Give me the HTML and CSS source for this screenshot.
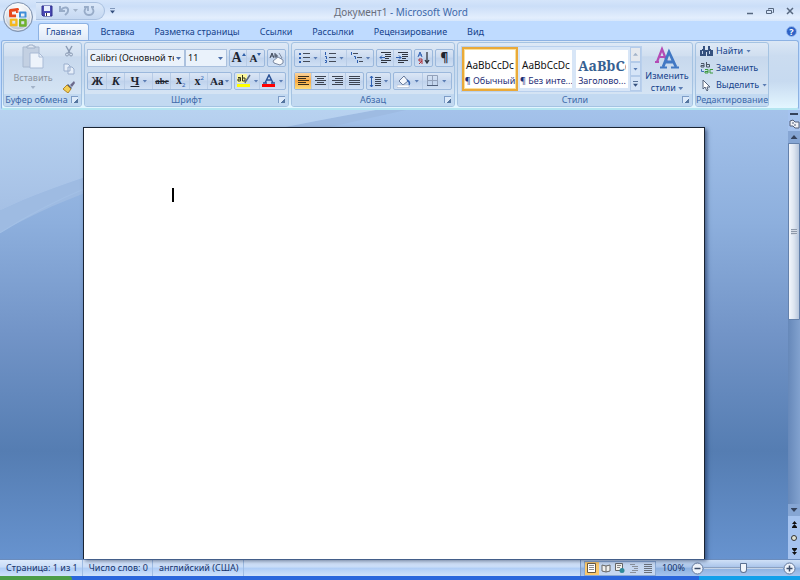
FILE: index.html
```html
<!DOCTYPE html>
<html lang="ru">
<head>
  <meta charset="UTF-8">
  <title>Документ1 - Microsoft Word</title>
  <meta name="viewport" content="width=device-width,initial-scale=1">
  <link rel="stylesheet" href="styles.css">
</head>
<body>
  <div class="window">
    <header class="titlebar">
      <button class="office" aria-label="Office">
        <svg width="32" height="32" viewBox="0 0 32 32">
          <defs>
            <radialGradient id="orb" cx=".5" cy=".25" r=".8"><stop offset="0" stop-color="#fff"/><stop offset=".55" stop-color="#dfe4ec"/><stop offset="1" stop-color="#a5b2c6"/></radialGradient>
          </defs>
          <circle cx="16" cy="16" r="14.5" fill="url(#orb)" stroke="#7f93b0"/>
          <circle cx="16" cy="16" r="13" fill="none" stroke="#fff" opacity=".7"/>
          <g fill="none" stroke-linejoin="round">
            <path d="M14 15H8.500V9.500L15.500 8.500V12" stroke="#e8481c" stroke-width="3"/>
            <path d="M18 11.500H23.500V16.500H18z" stroke="#3f8ed8" stroke-width="2"/>
            <path d="M9 18.500V24H14.500V18.500z" stroke="#f5b81d" stroke-width="2.500"/>
            <path d="M18 19H23.500V24.500H18z" stroke="#6fb22c" stroke-width="2.500"/>
          </g>
          <path d="M16.300 9v17M8 17h17" stroke="#fff" stroke-width=".8"/>
        </svg>
      </button>
      <div class="quick">
        <button aria-label="Сохранить"><svg width="12" height="12"><path d="M1 1h10v10H2l-1-1z" fill="#4a4ab4" stroke="#30308c"/><path d="M3 1h6v5H3z" fill="#e8eefc"/><path d="M4 8h5v3H4z" fill="#fff"/><path d="M5 8h1v3H5z" fill="#333"/></svg></button>
        <button class="off" aria-label="Отменить"><svg width="12" height="12"><path d="M2 1v5h5M3 5C6 1 11 2 10 6c0 2-2 3-3 4" fill="none" stroke="#98acc8" stroke-width="2"/></svg></button>
        <i class="ar gray"></i>
        <button class="off" aria-label="Повторить"><svg width="12" height="12"><path d="M3 3C0 6 2 10 6 10s6-4 3-7M5 6V2H1M8 2h3" fill="none" stroke="#98acc8" stroke-width="1.800"/></svg></button>
      </div>
      <button class="more" aria-label="Настройка панели"><i class="ar bar"></i></button>
      <h1 class="title"><span>Документ1</span> - Microsoft Word</h1>
      <div class="winbtns">
        <button aria-label="Свернуть"><svg width="8" height="8"><path d="M1 6.500h6" stroke="#56677f" stroke-width="1.500"/></svg></button>
        <button aria-label="Восстановить"><svg width="8" height="8"><path d="M2.500 2.500v-1h5v4h-1M.5 3.500h5v3h-5z" fill="none" stroke="#56677f"/></svg></button>
        <button aria-label="Закрыть"><svg width="8" height="8"><path d="M1 1l6 6M7 1L1 7" stroke="#56677f" stroke-width="1.500"/></svg></button>
      </div>
    </header>

    <nav class="tabs">
      <button class="tab active">Главная</button>
      <button class="tab">Вставка</button>
      <button class="tab">Разметка страницы</button>
      <button class="tab">Ссылки</button>
      <button class="tab">Рассылки</button>
      <button class="tab">Рецензирование</button>
      <button class="tab">Вид</button>
      <button class="help" aria-label="Справка">?</button>
    </nav>

    <div class="ribbon">
      <section class="group clip">
        <div class="body">
          <button class="big off">
            <svg width="24" height="26"><path d="M2 3h16v20H2z" fill="#c3d0e2" stroke="#a9b9d0"/><path d="M6 4h8V2h-2V1H8v1H6z" fill="#e0e8f3" stroke="#9fb0c8"/><path d="M9 9h9l4 4v11H9z" fill="#edf3fb" stroke="#a9bbd6"/><path d="M18 9v4h4" fill="none" stroke="#a9bbd6"/></svg>
            <span>Вставить</span>
            <i class="ar gray"></i>
          </button>
          <div class="col">
            <button class="off" aria-label="Вырезать"><svg width="12" height="12"><path d="M3 1l4 7M9 1L5 8" stroke="#8b9bb4" stroke-width="1.500"/><circle cx="4" cy="9.500" r="1.500" fill="none" stroke="#8b9bb4"/><circle cx="8" cy="9.500" r="1.500" fill="none" stroke="#8b9bb4"/></svg></button>
            <button class="off" aria-label="Копировать"><svg width="12" height="12"><path d="M1 1h4l2 2v5H1zM5 4h4l2 2v5H5z" fill="#e6eef9" stroke="#9aaecd"/></svg></button>
            <button aria-label="Формат по образцу"><svg width="14" height="12"><path d="M8 4l4-4 1 2-3 4z" fill="#6b6a8c"/><path d="M6 3l4 4-1 1-4-4z" fill="#555b78"/><path d="M5 4l4 4-3 4-5-4z" fill="#f3cf57" stroke="#b0862a"/></svg></button>
          </div>
        </div>
        <h2>Буфер обмена<button class="launch" aria-label="Буфер обмена: параметры"></button></h2>
      </section>

      <section class="group font">
        <div class="body rows">
          <div class="row">
            <label class="combo face"><select aria-label="Шрифт"><option>Calibri (Основной текст)</option></select></label>
            <label class="combo size"><select aria-label="Размер"><option>11</option></select></label>
            <div class="set">
              <button class="serif" aria-label="Увеличить"><span class="l">A</span><svg width="4" height="12"><path d="M0 4l2-3 2 3z" fill="#2f5fa8"/></svg></button>
              <button class="serif" aria-label="Уменьшить"><span class="s">A</span><svg width="4" height="12"><path d="M0 1h4L2 4z" fill="#2f5fa8"/></svg></button>
            </div>
            <div class="set"><button aria-label="Очистить формат"><svg width="15" height="15"><path d="M1 7l2-5 2 5M2 5h2M6 2v4h2V4H6" fill="none" stroke="#3b4456"/><path d="M10 2l3 5-3 1" fill="none" stroke="#7d8aa2"/><path d="M4 10l5-4 5 3v3l-3 2-6-2z" fill="#f8fafc" stroke="#7d8aa2"/></svg></button></div>
          </div>
          <div class="row">
            <div class="set letters">
              <button><b>Ж</b></button>
              <button><b><em>К</em></b></button>
              <button class="drop"><b><u>Ч</u></b><i class="ar"></i></button>
              <button class="small"><b><s>abc</s></b></button>
              <button><span><b>x</b><sub>2</sub></span></button>
              <button><span><b>x</b><sup>2</sup></span></button>
              <button class="drop aa"><b>Aa</b><i class="ar"></i></button>
            </div>
            <div class="set paint">
              <button class="drop" aria-label="Выделение"><svg width="14" height="14"><path d="M0 0h10v9H0z" fill="#fbf7a0"/><path d="M1 3.500h2.500V7H1V5h2M5.500 1v6H8V4H6" fill="none" stroke="#33351a"/><path d="M13 1L9 7l-1 2" stroke="#5a6a85" stroke-width="1.500" fill="none"/><path d="M0 10h13v3H0z" fill="#ff0"/></svg><i class="ar"></i></button>
              <button class="drop" aria-label="Цвет текста"><svg width="14" height="14"><path d="M3 9l4-8 4 8M4 6h6M1 9h4M9 9h4" fill="none" stroke="#2f5597" stroke-width="1.500"/><path d="M0 10h13v3H0z" fill="#f00"/></svg><i class="ar"></i></button>
            </div>
          </div>
        </div>
        <h2>Шрифт<button class="launch" aria-label="Шрифт: параметры"></button></h2>
      </section>

      <section class="group para">
        <div class="body rows">
          <div class="row">
            <div class="set lists">
              <button class="drop" aria-label="Маркеры"><svg width="12" height="12"><path d="M1 2h2M1 6h2M1 10h2" stroke="#2e5fb0" stroke-width="2"/><path d="M5 1.500h7M5 5.500h7M5 9.500h7" stroke="#444b58"/></svg><i class="ar"></i></button>
              <button class="drop" aria-label="Нумерация"><svg width="12" height="12"><path d="M1.500 0v3M1 4.500h1.500V7M1 8.500h1.500v2H1" fill="none" stroke="#2e5fb0"/><path d="M5 1.500h7M5 5.500h7M5 9.500h7" stroke="#444b58"/></svg><i class="ar"></i></button>
              <button class="drop" aria-label="Многоуровневый список"><svg width="13" height="12"><path d="M1.500 0v3M4 4.500h1.500V7M7.500 8v3" fill="none" stroke="#2e5fb0"/><path d="M3 1.500h5M7 5.500h5M9 9.500h4" stroke="#444b58"/></svg><i class="ar"></i></button>
            </div>
            <div class="set">
              <button aria-label="Уменьшить отступ"><svg width="13" height="12"><path d="M2 .5h10M6 2.500h6M6 4.500h6M6 6.500h4M2 8.500h10M2 10.500h6" stroke="#30353f"/><path d="M6 5.500H1M3 3.500l-2 2 2 2" stroke="#2e5fb0" fill="none"/></svg></button>
              <button aria-label="Увеличить отступ"><svg width="13" height="12"><path d="M2 .5h10M6 2.500h6M6 4.500h6M6 6.500h4M2 8.500h10M2 10.500h6" stroke="#30353f"/><path d="M0 5.500h5M3 3.500l2 2-2 2" stroke="#2e5fb0" fill="none"/></svg></button>
            </div>
            <div class="set"><button aria-label="Сортировка"><svg width="13" height="14"><path d="M1 6l2-5 2 5M2 4h3" stroke="#2e5fb0" fill="none"/><path d="M5 13V8H2v2h3L2 13" stroke="#b0323a" fill="none"/><path d="M10 1v10M8 9l2 3 2-3" stroke="#30353f" stroke-width="1.300" fill="none"/></svg></button></div>
            <div class="set"><button class="mark" aria-label="Знаки">¶</button></div>
          </div>
          <div class="row">
            <div class="set">
              <button class="on" aria-label="По левому краю"><svg width="13" height="12"><path d="M1 1.500h11M1 3.500h8M1 5.500h11M1 7.500h8M1 9.500h11" stroke="#3b2f1d"/></svg></button>
              <button aria-label="По центру"><svg width="13" height="12"><path d="M1 1.500h11M3 3.500h7M1 5.500h11M3 7.500h7M1 9.500h11" stroke="#3c4350"/></svg></button>
              <button aria-label="По правому краю"><svg width="13" height="12"><path d="M1 1.500h11M4 3.500h8M1 5.500h11M4 7.500h8M1 9.500h11" stroke="#3c4350"/></svg></button>
              <button aria-label="По ширине"><svg width="13" height="12"><path d="M1 1.500h11M1 3.500h11M1 5.500h11M1 7.500h11M1 9.500h11" stroke="#3c4350"/></svg></button>
            </div>
            <div class="set"><button class="drop line" aria-label="Интервал"><svg width="13" height="13"><path d="M2.500 1v11M1 3l1.500-2L4 3M1 10l1.500 2L4 10" fill="none" stroke="#2e5fb0"/><path d="M6 2.500h6M6 4.500h6M6 6.500h6M6 8.500h6M6 10.500h6" stroke="#3c4350"/></svg><i class="ar"></i></button></div>
            <div class="set paint">
              <button class="drop" aria-label="Заливка"><svg width="14" height="13"><path d="M2 6l5-5 4 5-5 4z" fill="#f4f7fc" stroke="#68799a"/><path d="M10 5c2 1 3 3 2 5" stroke="#3565b5" stroke-width="1.500" fill="none"/><path d="M0 10h12v2.500H0z" fill="#fff" stroke="#9aaac5" stroke-width=".5"/></svg><i class="ar"></i></button>
              <button class="drop" aria-label="Границы"><svg width="12" height="12"><path d="M.5 .5h10v10H.5zM5.500 1v9M1 5.500h9" fill="none" stroke="#93a2bb"/><path d="M0 10.500h11" stroke="#4f607c"/></svg><i class="ar"></i></button>
            </div>
          </div>
        </div>
        <h2>Абзац<button class="launch" aria-label="Абзац: параметры"></button></h2>
      </section>

      <section class="group styles">
        <div class="body">
          <div class="gallery">
            <button class="style on"><span class="sample">AaBbCcDc</span><span>¶ Обычный</span></button>
            <button class="style"><span class="sample">AaBbCcDc</span><span>¶ Без инте...</span></button>
            <button class="style"><span class="sample head">AaBbCc</span><span>Заголово...</span></button>
            <div class="gscroll">
              <button class="off" aria-label="Вверх"><i class="ar up gray"></i></button>
              <button aria-label="Вниз"><i class="ar"></i></button>
              <button aria-label="Все стили"><i class="ar bar"></i></button>
            </div>
          </div>
          <button class="big change">
            <svg width="26" height="24"><path d="M3 16L8 3l5 13M5 11h7M1 16h4M11 16h4" fill="none" stroke="#b44bb5" stroke-width="2.200"/><path d="M9 21l6-15 7 15M11 16h9" fill="none" stroke="#4178c4" stroke-width="2.800"/><path d="M6 21.500h7M17 21.500h8" stroke="#4178c4" stroke-width="2"/></svg>
            <span>Изменить</span>
            <span>стили <i class="ar"></i></span>
          </button>
        </div>
        <h2>Стили<button class="launch" aria-label="Стили: параметры"></button></h2>
      </section>

      <section class="group edit">
        <div class="body list">
          <button><svg width="13" height="12"><path d="M3 1h2v3H3zM8 1h2v3H8zM0 5h6v6H0zM7 5h6v6H7z" fill="#35507e"/><path d="M2 4h3v1H2zM8 4h3v1H8zM5 5h3v2H5z" fill="#35507e"/><path d="M2 6h1v3H2zM9 6h1v3H9z" fill="#c3d4ee"/></svg>Найти <i class="ar"></i></button>
          <button><svg width="13" height="12"><path d="M1 1.500h3V5H1V3.500h3M6.500 0v5h3V2.500H7" fill="none" stroke="#4a5465"/><path d="M1.500 7v2.500H4" fill="none" stroke="#3e6fb8"/><path d="M5 7.500h3V11H5V9.500h3M13 7.500h-3V11h3" fill="none" stroke="#3c9a3c"/></svg>Заменить</button>
          <button><svg width="13" height="12"><path d="M3 1v9l2-2 2 4 1-1-1-3h3z" fill="#fff" stroke="#56647c"/></svg>Выделить <i class="ar"></i></button>
        </div>
        <h2>Редактирование</h2>
      </section>
    </div>

    <main class="work">
      <svg class="swoosh" viewBox="0 0 788 450" preserveAspectRatio="none">
        <defs>
          <linearGradient id="sky" x1="0" y1="0" x2="0" y2="1"><stop offset="0" stop-color="#b8d2f0"/><stop offset="1" stop-color="#a5c0e5"/></linearGradient>
        </defs>
        <path d="M0 101C80 60 230 25 370 0H400C200 45 90 70 0 123z" fill="#9ebbe2"/>
        <path d="M0 0H370C230 25 80 60 0 101z" fill="url(#sky)"/>
        <path d="M0 123C60 85 110 66 170 50" fill="none" stroke="#a3c0e6"/>
      </svg>
      <div class="paper">
        <div class="text" role="textbox" aria-label="Текст документа" tabindex="0"><span class="caret"></span></div>
      </div>
      <aside class="scroll">
        <button class="split" aria-label="Разделить"></button>
        <button aria-label="Линейка"><svg width="11" height="10"><path d="M1 2l3-1 2 2h4v6H6L4 7H1z" fill="#eef1f6" stroke="#525f78"/><path d="M4 3v2M6 5v2" stroke="#525f78"/></svg></button>
        <div class="track">
          <button aria-label="Выше"><i class="ar up"></i></button>
          <div class="thumb"><i></i></div>
          <button aria-label="Ниже"><i class="ar"></i></button>
        </div>
        <button class="nav" aria-label="Предыдущая страница"><svg width="7" height="8"><path d="M3.500 0L6 3H1zM3.500 3L6 6H1zM1 6h5v1H1z" fill="#111"/></svg></button>
        <button class="nav" aria-label="Объект перехода"><svg width="8" height="8"><circle cx="4" cy="4" r="2.500" fill="#e0e3d4" stroke="#333"/></svg></button>
        <button class="nav" aria-label="Следующая страница"><svg width="7" height="8"><path d="M1 1h5v1H1zM1 2h5L3.500 5zM1 5h5L3.500 8z" fill="#111"/></svg></button>
      </aside>
    </main>

    <footer class="status">
      <button>Страница: 1 из 1</button>
      <button>Число слов: 0</button>
      <button>английский (США)</button>
      <div class="right">
        <div class="views">
          <button class="on" aria-label="Разметка страницы"><svg width="10" height="10"><path d="M.5 .5h8v9h-8z" fill="#fff" stroke="#6b5a3c"/><path d="M2 2.500h5M2 4.500h5M2 6.500h5" stroke="#8c8c8c"/></svg></button>
          <button aria-label="Режим чтения"><svg width="10" height="10"><path d="M1 2l4 1 4-1v6L5 9 1 8zM5 3v6" fill="#f1f1ee" stroke="#666"/></svg></button>
          <button aria-label="Веб-документ"><svg width="10" height="10"><path d="M.5 .5h7v7h-7z" fill="#f1f1ee" stroke="#666"/><path d="M2 2.500h4M2 4.500h3" stroke="#888"/><circle cx="7" cy="7.500" r="2.500" fill="#2f8a9a"/></svg></button>
          <button aria-label="Структура"><svg width="10" height="10"><path d="M1 1.500h5M3 3.500h6M5 5.500h4M3 7.500h6M1 9.500h6" stroke="#8a919c"/></svg></button>
          <button aria-label="Черновик"><svg width="10" height="10"><path d="M1 1.500h8M1 3.500h8M1 5.500h8M1 7.500h8M1 9.500h8" stroke="#6a717c"/></svg></button>
        </div>
        <button class="pct">100%</button>
        <button class="round" aria-label="Уменьшить масштаб"><svg width="13" height="13"><circle cx="6.500" cy="6.500" r="5.500" fill="#eef3fb" stroke="#62789c"/><path d="M3.500 6.500h6" stroke="#3c4d69" stroke-width="1.500"/></svg></button>
        <input class="zoom" type="range" min="0" max="100" value="50" aria-label="Масштаб">
        <button class="round" aria-label="Увеличить масштаб"><svg width="13" height="13"><circle cx="6.500" cy="6.500" r="5.500" fill="#eef3fb" stroke="#62789c"/><path d="M3.500 6.500h6M6.500 3.500v6" stroke="#3c4d69" stroke-width="1.500"/></svg></button>
      </div>
    </footer>
    <div class="taskbar"><div class="start"></div><div class="tray"></div></div>
  </div>
</body>
</html>
```
FILE: styles.css
```css
* { box-sizing: border-box; }
body { margin: 0; font: 9px/12px "Noto Sans", "Open Sans", sans-serif; color: #15428b; }
button { display: flex; align-items: center; justify-content: center; background: none; border: 0; padding: 0; margin: 0; font: inherit; color: inherit; white-space: nowrap; }
svg { display: block; flex: none; }
h1, h2 { margin: 0; font-weight: normal; }
.window { display: flex; flex-direction: column; height: 100vh; background: #bfdbff; }

/* small drop-down arrows */
.ar { display: inline-block; flex: none; width: 5px; height: 3px; background: #5a7cb3; clip-path: polygon(0 0, 100% 0, 50% 100%); vertical-align: middle; }
.ar.up { clip-path: polygon(50% 0, 100% 100%, 0 100%); }
.ar.gray { background: #a3b3c9; }
.ar.bar { height: 6px; background: #35507e; clip-path: polygon(0 0, 100% 0, 100% 1px, 0 1px, 0 3px, 100% 3px, 50% 100%, 0 3px); }

/* title bar */
.titlebar { position: relative; display: flex; align-items: center; height: 21px; padding-left: 36px; background: linear-gradient(#d5e5fa, #cbdef8 30%, #e3eefd 85%, #d6e6fb); flex: none; }
.office { position: absolute; left: 2px; top: 1px; z-index: 2; }
.quick { display: flex; align-items: center; gap: 5px; height: 18px; padding: 0 9px 0 5px; border: 1px solid #a9c0df; border-left: 0; border-radius: 0 9px 9px 0; background: linear-gradient(#dbe8f9, #c5d8f1); }
.quick button + .ar { margin-left: -2px; }
.more { padding: 0 5px; }
.title { flex: 1; text-align: center; font-size: 10px; line-height: 14px; color: #3e6aaa; padding: 2px 24px 0 0; }
.title span { color: #696f7b; }
.winbtns { display: flex; gap: 12px; padding-right: 6px; margin-left: 40px; }

/* tabs */
.tabs { display: flex; height: 19px; padding: 2px 3px 0 38px; background: #bfdbff; flex: none; }
.tab { padding: 0 10px; height: 17px; }
.tab.active { padding: 0 7px; margin-right: 1px; border: 1px solid #8db2e3; border-bottom: 0; border-radius: 3px 3px 0 0; background: linear-gradient(#f8fbff, #dfeaf8); }
.help { align-self: center; margin-left: auto; width: 11px; height: 11px; border-radius: 50%; background: #2d62c6; border: 1px solid #9dbdf0; color: #fff; font-weight: bold; }

/* ribbon */
.ribbon { display: flex; gap: 2px; height: 70px; margin: 0 1px; padding: 1px; flex: none; border: 1px solid #8db2e3; border-bottom: 2px solid #b3e5f0; border-radius: 3px; background: linear-gradient(#dbe7f5, #cbdcf0 22%, #c7daf0 60%, #e3f6ff); }
.group { display: flex; flex-direction: column; border: 1px solid #a5c3e2; border-radius: 3px; background: linear-gradient(#dee9f6, #d1dff0 20%, #c7d8ed 22%, #d9e8f6); overflow: hidden; }
.group h2 { display: flex; justify-content: center; align-items: center; position: relative; height: 12px; background: #c2d9f1; color: #3e6aaa; font-size: 9px; white-space: nowrap; }
.body { flex: 1; display: flex; }
.clip { width: 79px; }
.clip h2 { padding-right: 12px; }
.font { width: 205px; }
.para { width: 164px; }
.styles { width: 236px; }
.edit { width: 74px; }
.launch { position: absolute; right: 3px; top: 2px; width: 7px; height: 7px; border-left: 1px solid #7d9cc6; border-top: 1px solid #7d9cc6; background: linear-gradient(135deg, #dceafa 65%, #55759f 65%); }
.big { flex-direction: column; justify-content: flex-start; }
.clip .big { width: 58px; padding-top: 1px; color: #8d949f; }
.clip .big span { padding: 2px 0; }
.col { display: flex; flex-direction: column; justify-content: space-between; padding: 2px 0 1px; }
.rows { flex-direction: column; gap: 5px; padding: 6px 2px 0; }
.row { display: flex; gap: 2px; }
.set { display: flex; height: 18px; border: 1px solid #9bb8dc; border-radius: 2px; background: linear-gradient(#dbe6f5, #cadaf0 45%, #bfd2ec 50%, #d0e0f4); color: #1d2430; font-size: 12px; }
.set button { width: 17px; }
.set button + button { box-shadow: -1px 0 #b8cce6; }
.set .drop { width: 25px; gap: 3px; }
.set .on { background: linear-gradient(#fbd5a0, #f9a940 50%, #fddc7c); }
.set .mark { font-size: 12px; font-weight: bold; }
.combo { position: relative; display: flex; height: 18px; border: 1px solid #abc1de; background: #eaf2fb; }
.combo::after { content: ""; position: absolute; right: 3px; top: 7px; width: 5px; height: 3px; background: #4a6ea9; clip-path: polygon(0 0, 100% 0, 50% 100%); pointer-events: none; }
.combo select { appearance: none; flex: 1; min-width: 0; margin-right: 10px; border: 0; padding: 0 0 0 2px; background: none; font: inherit; color: #111; overflow: hidden; text-overflow: clip; }
.face { width: 98px; }
.size { width: 44px; margin-left: -2px; }
.serif { font-family: "Liberation Serif", serif; font-weight: bold; }
.serif .l { font-size: 14px; }
.serif .s { font-size: 11px; }
.letters { width: 145px; }
.letters button { flex: 1 1 18px; width: auto; }
.letters .drop { flex: 1 1 27px; }
.letters .aa { flex: 1 1 22px; gap: 1px; font-size: 11px; }
.letters .small { font-size: 9px; }
.letters b { font-family: "Liberation Serif", serif; font-weight: bold; }
.letters sub, .letters sup { font-size: 6px; line-height: 6px; color: #2e5fb0; }
.paint { flex: 1; }
.paint .drop { flex: 1; width: auto; }
.lists .drop { width: 26px; }
.set .line { width: 23px; gap: 2px; }

/* style gallery */
.styles .body { padding: 3px 3px 0; gap: 3px; }
.gallery { display: flex; height: 46px; border: 1px solid #b9d0ed; background: #d8e6f7; }
.style { flex-direction: column; align-items: stretch; justify-content: space-between; width: 56px; padding: 9px 0 1px; border: 3px solid #d8e6f7; border-width: 3px 2px; background: #fff; color: #1f2f77; overflow: hidden; }
.style.on { border: 2px solid #e9a93a; padding: 10px 0 2px; box-shadow: inset 0 0 0 1px #fbe09a; }
.sample { padding-left: 2px; width: 50px; overflow: hidden; font-size: 10px; color: #111; text-align: left; }
.sample.head { font: bold 14px/14px "Noto Serif", "DejaVu Serif", "Liberation Serif", serif; color: #365f91; }
.gscroll { display: flex; flex-direction: column; width: 11px; }
.gscroll button { flex: 1; border: 1px solid #b4cbe9; background: #d5e4f7; }
.gscroll .off { background: #e6e9ee; }
.change { flex: 1; }

.list { flex-direction: column; justify-content: space-between; align-items: flex-start; padding: 2px 0 3px 4px; }
.list button { gap: 3px; }

/* document area */
.work { position: relative; flex: 1; min-height: 0; display: flex; background: linear-gradient(#a4c2ea, #8dafdd 25%, #7294c7 50%, #557db2 76%, #6793cf); }
.swoosh { position: absolute; left: 0; top: 0; width: 100%; height: 100%; }
.paper { position: relative; width: 79%; max-width: 622px; margin: 17px auto 0; border: 1px solid #1a2433; border-bottom: 0; background: #fff; box-shadow: 2px 2px 4px rgba(20,40,80,0.6); }
.text { padding: 60px 88px; outline: 0; }
.caret { display: block; width: 2px; height: 14px; background: #000; }
.scroll { position: relative; display: flex; flex-direction: column; align-items: center; width: 12px; padding: 3px 0 2px; background: #a5c3ef; }
.scroll .split { width: 8px; height: 2px; margin-bottom: 4px; background: #35435c; }
.track { flex: 1; display: flex; flex-direction: column; width: 100%; margin: 2px 0; background: linear-gradient(90deg, #6688b9, #82a2cf); }
.track button { height: 12px; background: #86a6d4; }
.track .ar { width: 7px; height: 4px; background: #35435c; }
.thumb { display: flex; align-items: center; justify-content: center; height: 46%; margin-bottom: auto; border: 1px solid #6481ab; border-radius: 1px; background: linear-gradient(90deg, #f2f6fc, #dde5f0 50%, #b7c6dc); }
.thumb i { width: 6px; height: 6px; background: repeating-linear-gradient(#8e99aa 0 1px, #d5dbe5 1px 2px); }
.nav { height: 13px; }

/* status bar */
.status { display: flex; height: 17px; flex: none; border-top: 1px solid #6b8cbc; background: linear-gradient(#dce9fb, #c8dcf8 45%, #aeccf6 50%, #d0e2fa); color: #15326b; }
.status > button { padding: 0 4px 0 6px; border-right: 1px solid #a0bde4; }
.right { display: flex; align-items: center; margin-left: auto; padding: 0 4px 0 3px; border-left: 1px solid #7f9cc8; background: linear-gradient(#cfe0f7, #a9c4ea 45%, #8db0df 50%, #a6c4ee); }
.views { display: flex; border: 1px solid #8ba9d3; background: #c5d7f0; }
.views button { width: 14px; height: 13px; }
.views .on { background: #fbc96c; }
.pct { padding: 0 6px; }
.zoom { appearance: none; width: 79px; height: 12px; margin: 0; background: linear-gradient(#6d87ae, #e4eefb) center / 100% 2px no-repeat; }
.zoom::-webkit-slider-thumb { appearance: none; width: 7px; height: 10px; border: 1px solid #5b7091; border-radius: 1px 1px 4px 4px; background: #f0f4fa; }

.taskbar { display: flex; height: 4px; flex: none; background: #2a66dc; }
.start { width: 9%; background: #4c9d48; border-radius: 0 3px 0 0; }
.tray { width: 101px; margin-left: auto; background: #12a0ea; }
```
